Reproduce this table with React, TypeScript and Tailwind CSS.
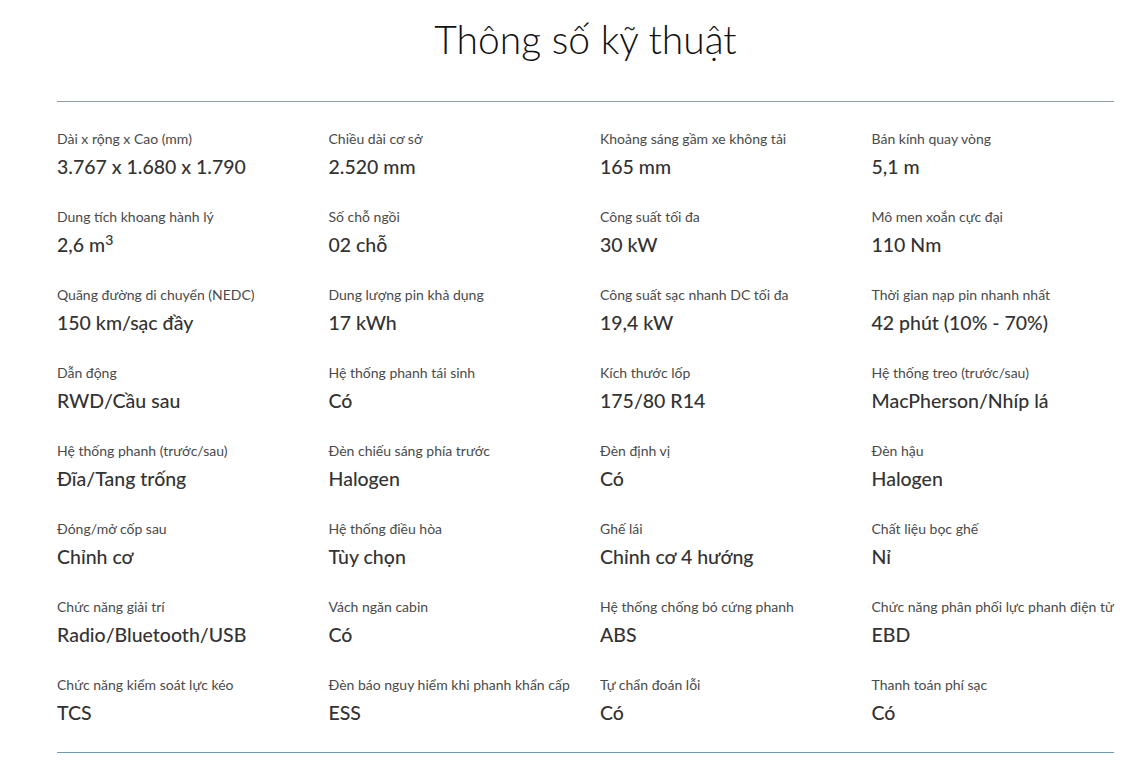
import React from 'react';

type Spec = { label: string; value: React.ReactNode };

const specs: Spec[] = [
    { label: 'Dài x rộng x Cao (mm)', value: '3.767 x 1.680 x 1.790' },
    { label: 'Chiều dài cơ sở', value: '2.520 mm' },
    { label: 'Khoảng sáng gầm xe không tải', value: '165 mm' },
    { label: 'Bán kính quay vòng', value: '5,1 m' },
    {
        label: 'Dung tích khoang hành lý',
        value: (
            <>
                2,6 m<sup className="text-[14px]">3</sup>
            </>
        ),
    },
    { label: 'Số chỗ ngồi', value: '02 chỗ' },
    { label: 'Công suất tối đa', value: '30 kW' },
    { label: 'Mô men xoắn cực đại', value: '110 Nm' },
    { label: 'Quãng đường di chuyển (NEDC)', value: '150 km/sạc đầy' },
    { label: 'Dung lượng pin khả dụng', value: '17 kWh' },
    { label: 'Công suất sạc nhanh DC tối đa', value: '19,4 kW' },
    { label: 'Thời gian nạp pin nhanh nhất', value: '42 phút (10% - 70%)' },
    { label: 'Dẫn động', value: 'RWD/Cầu sau' },
    { label: 'Hệ thống phanh tái sinh', value: 'Có' },
    { label: 'Kích thước lốp', value: '175/80 R14' },
    { label: 'Hệ thống treo (trước/sau)', value: 'MacPherson/Nhíp lá' },
    { label: 'Hệ thống phanh (trước/sau)', value: 'Đĩa/Tang trống' },
    { label: 'Đèn chiếu sáng phía trước', value: 'Halogen' },
    { label: 'Đèn định vị', value: 'Có' },
    { label: 'Đèn hậu', value: 'Halogen' },
    { label: 'Đóng/mở cốp sau', value: 'Chỉnh cơ' },
    { label: 'Hệ thống điều hòa', value: 'Tùy chọn' },
    { label: 'Ghế lái', value: 'Chỉnh cơ 4 hướng' },
    { label: 'Chất liệu bọc ghế', value: 'Nỉ' },
    { label: 'Chức năng giải trí', value: 'Radio/Bluetooth/USB' },
    { label: 'Vách ngăn cabin', value: 'Có' },
    { label: 'Hệ thống chống bó cứng phanh', value: 'ABS' },
    { label: 'Chức năng phân phối lực phanh điện tử', value: 'EBD' },
    { label: 'Chức năng kiểm soát lực kéo', value: 'TCS' },
    { label: 'Đèn báo nguy hiểm khi phanh khẩn cấp', value: 'ESS' },
    { label: 'Tự chẩn đoán lỗi', value: 'Có' },
    { label: 'Thanh toán phí sạc', value: 'Có' },
];

export default function App() {
    return (
        <div className="min-h-[764px] bg-white font-['Lato','Noto_Sans',sans-serif]">
            <div className="ml-[57px] w-[1057px]">
                <h1 className="pt-[16px] text-center text-[39px] font-light leading-[46px] text-[#111]">
                    Thông số kỹ thuật
                </h1>

                <div className="mt-[39px] h-px bg-[#8b9ba8]" />

                {/* Specs grid */}
                <div className="grid grid-cols-4 auto-rows-[78px] gap-x-[29px] pt-[27px]">
                    {specs.map((s) => (
                        <div key={s.label} className="whitespace-nowrap">
                            <div className="text-[14px] leading-[20px] text-[#4a4a4a]">{s.label}</div>
                            <div className="mt-[6px] text-[19.5px] font-medium leading-[24px] text-[#333]">
                                {s.value}
                            </div>
                        </div>
                    ))}
                </div>

                <div className="-mt-px h-px bg-[#6f9bb2]" />
            </div>
        </div>
    );
}
